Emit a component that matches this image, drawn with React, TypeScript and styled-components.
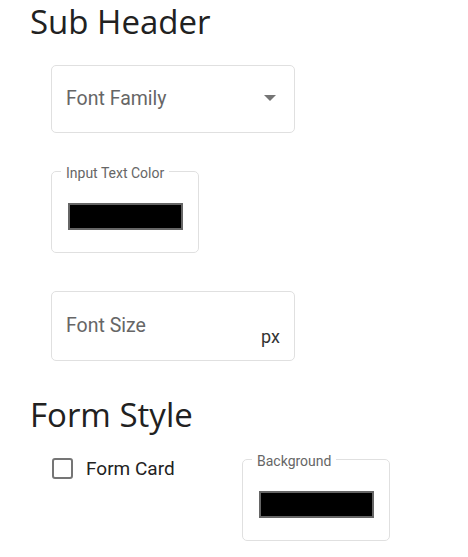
import React from "react";
import styled, { createGlobalStyle } from "styled-components";

const GlobalStyle = createGlobalStyle`
  html, body { margin: 0; padding: 0; background: #ffffff; }
  body { font-family: Roboto, "Liberation Sans", sans-serif; }
  * { box-sizing: border-box; }
`;

const Page = styled.div`
  padding: 2px 0 0 30px;
  width: 468px;
`;

const Heading = styled.h2<{ $top?: number }>`
  margin: ${(p) => p.$top ?? 0}px 0 0 0;
  font-family: "Open Sans", "Liberation Sans", sans-serif;
  font-weight: 400;
  font-size: 33px;
  line-height: 40px;
  color: #212121;
`;

const Fields = styled.div`
  display: flex;
  flex-direction: column;
  align-items: flex-start;
  margin-left: 21px;
`;

const OutlinedBox = styled.div<{ $top: number; $height: number; $center?: boolean }>`
  display: flex;
  align-items: ${(p) => (p.$center ? "center" : "flex-start")};
  width: 244px;
  height: ${(p) => p.$height}px;
  margin-top: ${(p) => p.$top}px;
  border: 1px solid #e0e0e0;
  border-radius: 5px;
  padding: 0 14px;
`;

const Placeholder = styled.span<{ $top?: number }>`
  margin-top: ${(p) => p.$top ?? 0}px;
  font-size: 19.5px;
  line-height: 20px;
  color: #666666;
`;

const Arrow = styled.svg`
  display: block;
  margin: 0 4px 2px auto;
`;

const Unit = styled.span`
  margin: 35px 0 0 auto;
  font-size: 18px;
  line-height: 20px;
  color: #333333;
`;

const ColorField = styled.fieldset<{ $top: number }>`
  width: 148px;
  margin: ${(p) => p.$top}px 0 0 0;
  min-width: 0;
  border: 1px solid #e0e0e0;
  border-radius: 5px;
  padding: 22px 15px 22px 9px;
`;

const Legend = styled.legend`
  padding: 4px 5px 0 5px;
  font-size: 14px;
  line-height: 16px;
  color: #666666;
`;

const Swatch = styled.div<{ $color: string }>`
  width: 115px;
  height: 27px;
  margin-left: 7px;
  background: ${(p) => p.$color};
  border: 2px solid #666666;
`;

const FormRow = styled.div`
  display: grid;
  grid-template-columns: 191px 148px;
  align-items: start;
  margin: 14px 0 0 21px;
`;

const CheckLabel = styled.label`
  display: flex;
  align-items: flex-start;
  gap: 13px;
`;

const CheckBox = styled.span`
  display: block;
  width: 21px;
  height: 21px;
  margin: 9px 0 0 1px;
  border: 2px solid #757575;
  border-radius: 3px;
`;

const CheckText = styled.span`
  margin-top: 10px;
  font-size: 19px;
  line-height: 20px;
  color: #222222;
`;

export default function App() {
  return (
    <>
      <GlobalStyle />
      <Page>
        <Heading>Sub Header</Heading>
        <Fields>
          <OutlinedBox $top={23} $height={68} $center>
            <Placeholder>Font Family</Placeholder>
            <Arrow width="12" height="6" viewBox="0 0 12 6">
              <path d="M0 0 L12 0 L6 6 Z" fill="#757575" />
            </Arrow>
          </OutlinedBox>
          <ColorField $top={28}>
            <Legend>Input Text Color</Legend>
            <Swatch $color="#000000" />
          </ColorField>
          <OutlinedBox $top={38} $height={70}>
            <Placeholder $top={24}>Font Size</Placeholder>
            <Unit>px</Unit>
          </OutlinedBox>
        </Fields>
        <Heading $top={34}>Form Style</Heading>
        <FormRow>
          <CheckLabel>
            <CheckBox />
            <CheckText>Form Card</CheckText>
          </CheckLabel>
          <ColorField $top={0}>
            <Legend>Background</Legend>
            <Swatch $color="#000000" />
          </ColorField>
        </FormRow>
      </Page>
    </>
  );
}
